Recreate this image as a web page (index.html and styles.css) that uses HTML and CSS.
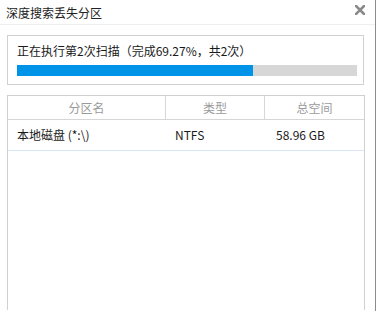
FILE: index.html
```html
<!DOCTYPE html>
<html lang="zh">
<head>
<meta charset="utf-8">
<link rel="stylesheet" href="styles.css">
</head>
<body>
<div class="screen">
  <div class="window">
    <div class="titlebar">
      <span class="title">深度搜索丢失分区</span>
      <svg class="close" width="10" height="10" viewBox="0 0 10 10"><path d="M1 1L9 9M9 1L1 9" stroke="#8a8a8a" stroke-width="2.6" stroke-linecap="square"/></svg>
    </div>
    <div class="content">
      <div class="progress-box">
        <div class="status">正在执行第2次扫描（完成69.27%，共2次）</div>
        <div class="bar"><div class="fill" style="width:69.27%"></div></div>
      </div>
      <div class="table">
        <div class="thead">
          <div class="th">分区名</div>
          <div class="th">类型</div>
          <div class="th">总空间</div>
        </div>
        <div class="tr">
          <div class="td name">本地磁盘 (*:\)</div>
          <div class="td type">NTFS</div>
          <div class="td size">58.96 GB</div>
        </div>
      </div>
    </div>
  </div>
  <div class="edge"></div>
</div>
</body>
</html>
```
FILE: styles.css
```css
html, body {
  margin: 0;
  padding: 0;
  background: #ffffff;
}
body {
  width: 378px;
  height: 311px;
  overflow: hidden;
  font-family: "Noto Sans CJK SC", "Microsoft YaHei", sans-serif;
  font-size: 12px;
  color: #1a1a1a;
}
.screen {
  display: flex;
  height: 311px;
}
.window {
  width: 375px;
  border-right: 1px solid #8c8c8c;
  display: flex;
  flex-direction: column;
  background: #fff;
}
.edge {
  flex: 1;
  background: #fff;
}
.titlebar {
  height: 25px;
  border-bottom: 1px solid #efefef;
  display: flex;
  align-items: center;
  justify-content: space-between;
  padding: 0 10px 0 6px;
  box-sizing: border-box;
}
.title {
  font-size: 12px;
  color: #222;
  line-height: 25px;
}
.close {
  display: block;
  margin-top: -4px;
}
.content {
  padding: 10px 11px 0 7px;
  display: flex;
  flex-direction: column;
}
.progress-box {
  border: 1px solid #d2d2d2;
  height: 50px;
  box-sizing: border-box;
  padding: 6px 5px 0 9px;
}
.status {
  line-height: 18px;
  height: 18px;
  color: #1a1a1a;
}
.bar {
  margin-top: 5px;
  width: 340px;
  height: 11px;
  background: #d7d7d7;
}
.fill {
  height: 100%;
  background: #0094e8;
}
.table {
  margin-top: 10px;
  width: 358px;
  height: 215px;
  border: 1px solid #d0d0d0;
  border-bottom: none;
  box-sizing: border-box;
}
.thead, .tr {
  display: grid;
  grid-template-columns: 157px 99px 1fr;
}
.thead {
  height: 24px;
  border-bottom: 1px solid #d6d6d6;
  box-sizing: border-box;
}
.th {
  color: #9a9a9a;
  text-align: center;
  line-height: 23px;
  border-left: 1px solid #d6d6d6;
}
.th:first-child {
  border-left: none;
}
.tr {
  height: 31px;
  border-bottom: 1px solid #d8e7f7;
  box-sizing: border-box;
}
.td {
  line-height: 30px;
  color: #1a1a1a;
}
.name { padding-left: 9px; }
.type { padding-left: 10px; }
.size { padding-left: 12px; }
```
